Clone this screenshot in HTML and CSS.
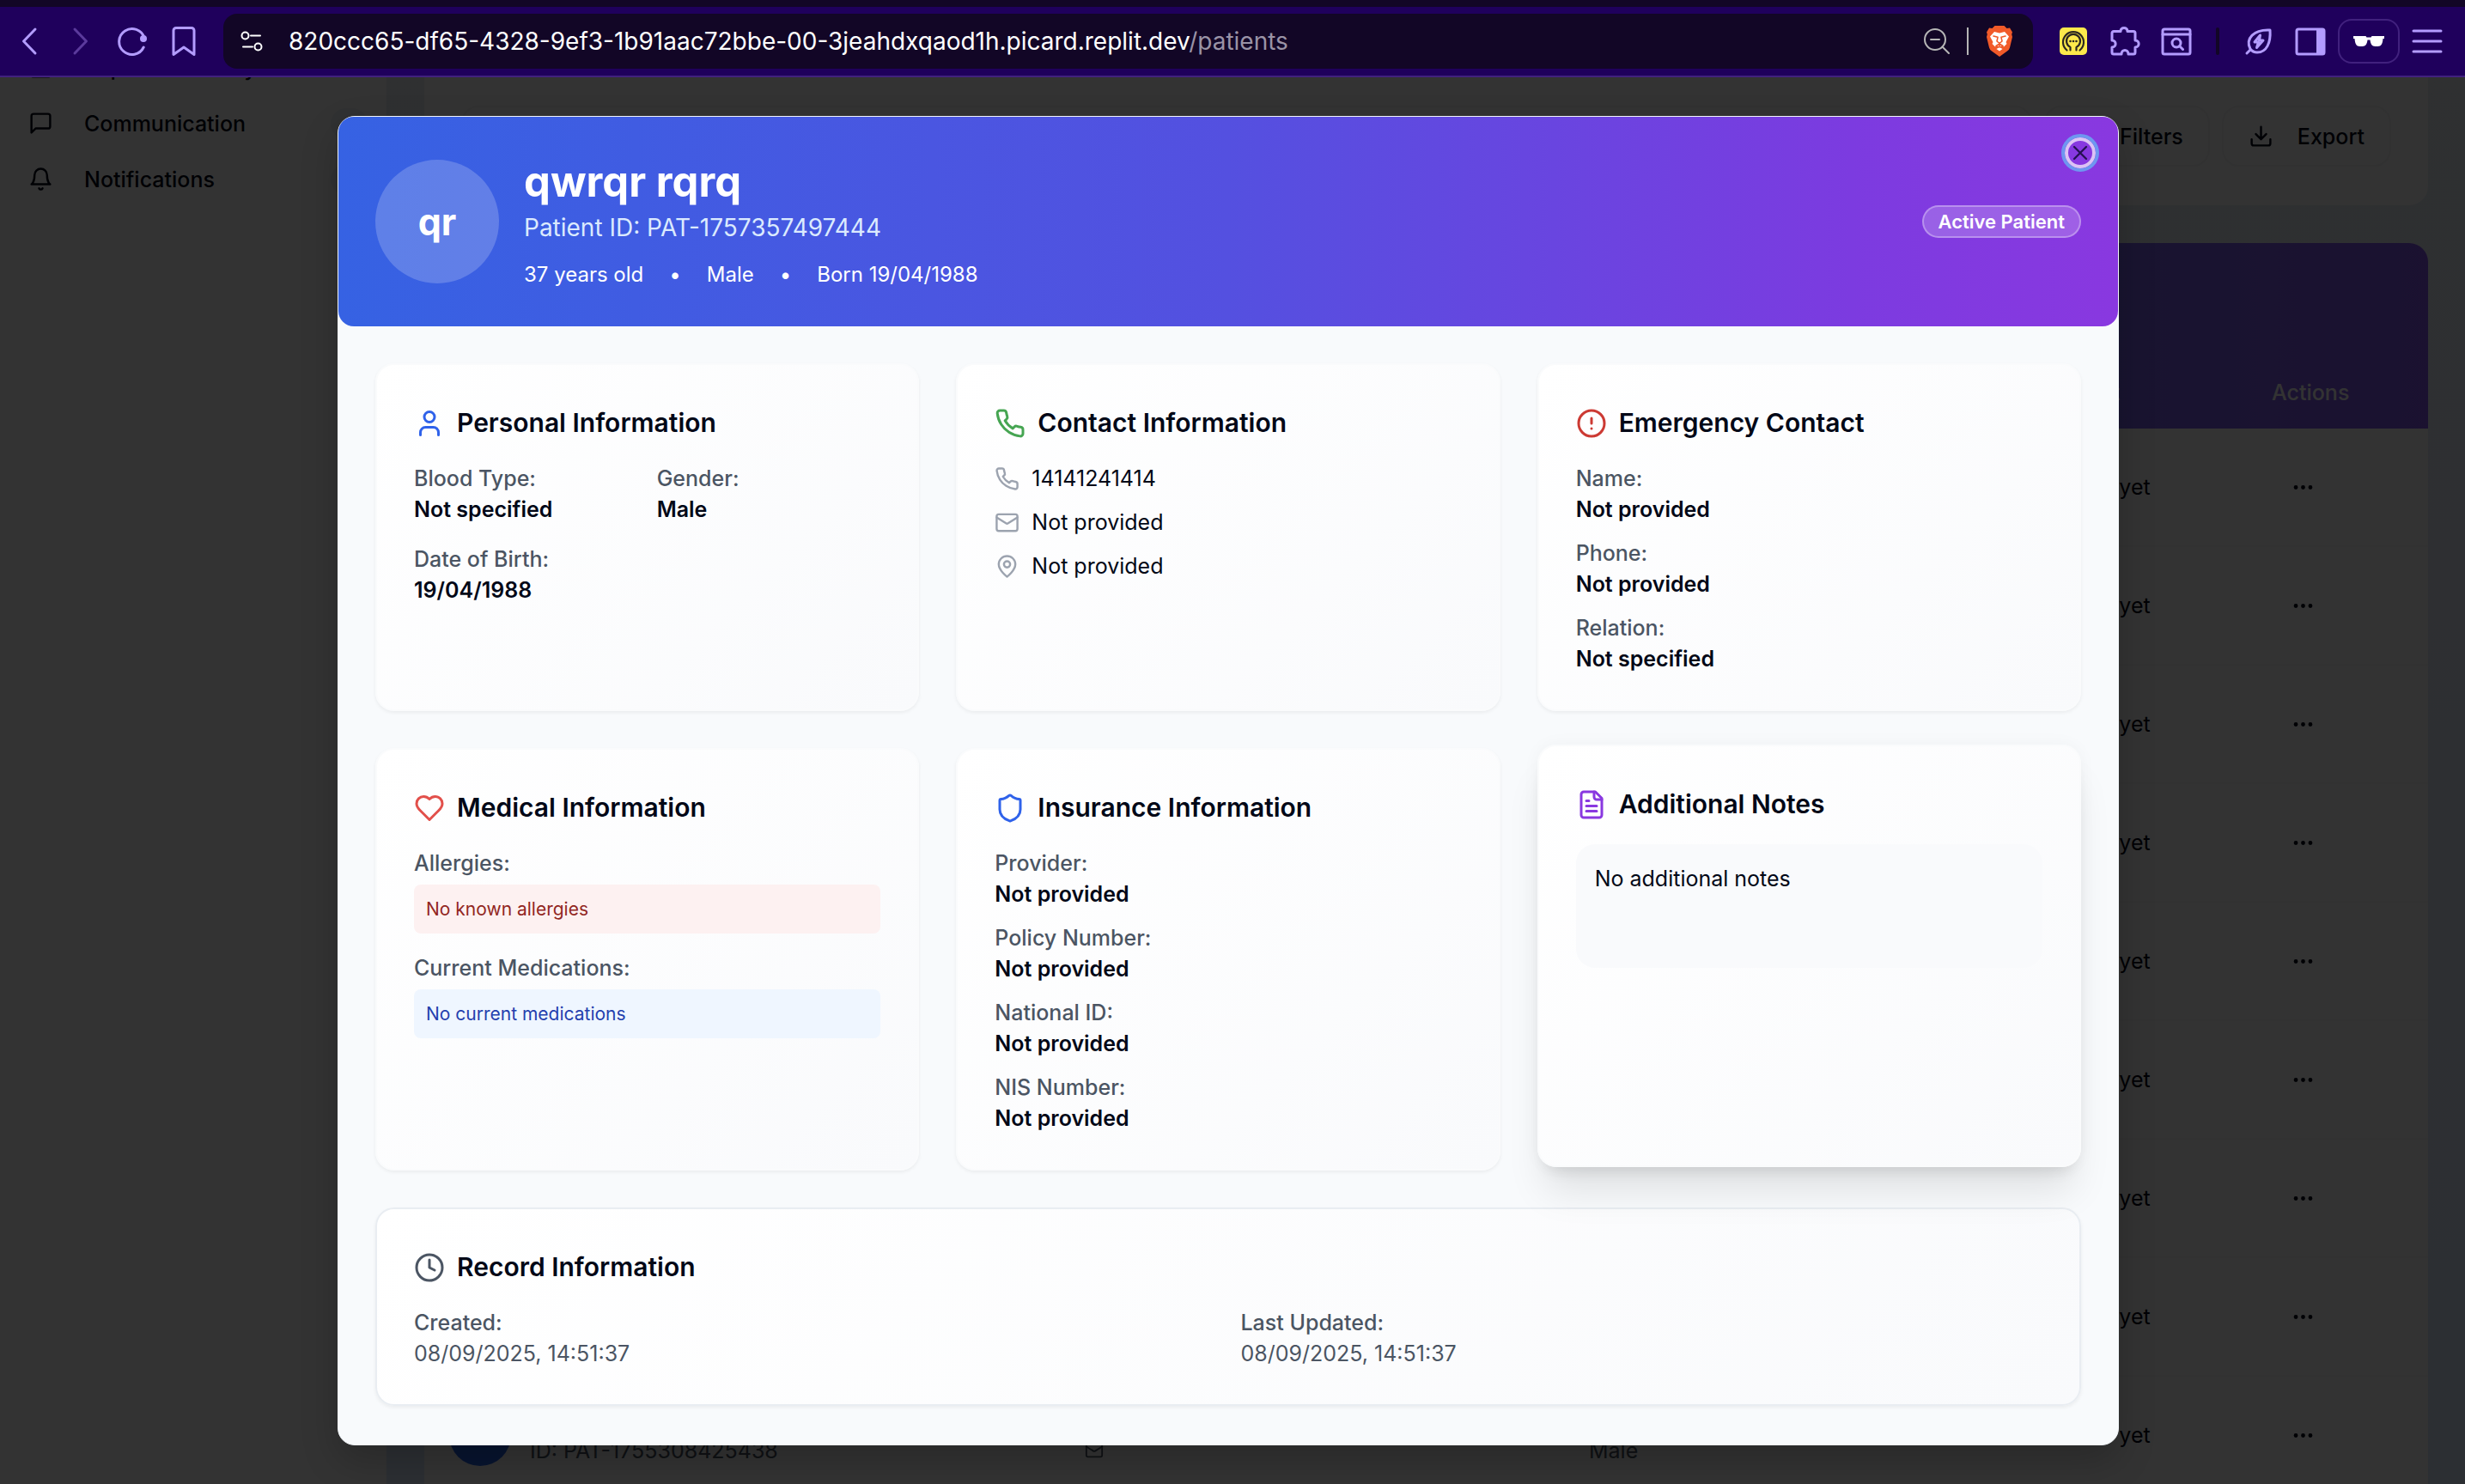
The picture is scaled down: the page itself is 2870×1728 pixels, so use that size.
FILE: index.html
```html
<!DOCTYPE html>
<html lang="en">
<head>
<meta charset="utf-8">
<title>Patients</title>
<link rel="stylesheet" href="styles.css">
</head>
<body>
<svg class="sprite" aria-hidden="true">
  <symbol id="i-phone" viewBox="0 0 24 24"><path d="M22 16.92v3a2 2 0 0 1-2.18 2 19.79 19.79 0 0 1-8.63-3.07 19.5 19.5 0 0 1-6-6 19.79 19.79 0 0 1-3.07-8.67A2 2 0 0 1 4.11 2h3a2 2 0 0 1 2 1.72 12.84 12.84 0 0 0 .7 2.81 2 2 0 0 1-.45 2.11L8.09 9.91a16 16 0 0 0 6 6l1.27-1.27a2 2 0 0 1 2.11-.45 12.84 12.84 0 0 0 2.81.7A2 2 0 0 1 22 16.92z"/></symbol>
  <symbol id="i-mail" viewBox="0 0 24 24"><rect width="20" height="16" x="2" y="4" rx="2"/><path d="m22 7-8.97 5.7a1.94 1.94 0 0 1-2.06 0L2 7"/></symbol>
  <symbol id="i-dots" viewBox="0 0 24 24"><circle cx="12" cy="12" r="1"/><circle cx="19" cy="12" r="1"/><circle cx="5" cy="12" r="1"/></symbol>
</svg>

<header class="browser">
  <div class="tool-group">
    <button class="tool" aria-label="Back"><svg class="ti" viewBox="0 0 36 36"><path d="M25 4 11.500 18 25 32"/></svg></button>
    <button class="tool tool-off" aria-label="Forward"><svg class="ti" viewBox="0 0 36 36"><path d="M11 4 24.500 18 11 32"/></svg></button>
    <button class="tool" aria-label="Reload"><svg class="ti" viewBox="0 0 36 36"><path d="M31.200 25A15 15 0 1 1 32 14"/><circle class="solid" cx="31" cy="15" r="4"/></svg></button>
    <button class="tool" aria-label="Bookmark"><svg class="ti" viewBox="0 0 36 36"><path d="M9 2.500h18a3 3 0 0 1 3 3v28l-12-8.500-12 8.500v-28a3 3 0 0 1 3-3z"/></svg></button>
  </div>
  <div class="address">
    <svg class="tune" viewBox="0 0 26 26"><circle cx="5.500" cy="6.500" r="4"/><path d="M12 6.500h11M3 19.500h11"/><circle cx="20.500" cy="19.500" r="4"/></svg>
    <p class="url">820ccc65-df65-4328-9ef3-1b91aac72bbe-00-3jeahdxqaod1h.picard.replit.dev<span class="url-path">/patients</span></p>
    <div class="address-end">
      <svg class="zoom-out" viewBox="0 0 30 30"><circle cx="13" cy="13" r="12"/><path d="M8 13h10M21.500 21.500 29 29"/></svg>
      <span class="address-line"></span>
      <svg class="brave" viewBox="0 0 32 36"><path fill="#f15a29" d="M10.500 0h11l3 3 3.500-.5 3 5-.8 2.500.8 3-3 12.500a7 7 0 0 1-3 4L16 36l-9-6.500a7 7 0 0 1-3-4L1 13l.8-3L1 7.500l3-5 3.500.5z"/><path fill="#fff" d="M10 7l6 1.500L22 7l5 5.500-3.500 6.500 1 2-3.500 3.500-2-1.500-3 1.500-3-1.500-2 1.500L7.500 21l1-2L5 12.500zM16 25l3.500 2-3.500 2.500-3.500-2.500z"/><path fill="none" stroke="#f15a29" stroke-width="1.600" d="M9 12l5 1.300-1 4.700 3 2.500 3-2.500-1-4.700 5-1.300M12 23.500l4-2.500 4 2.500M16 21v4"/></svg>
    </div>
  </div>
  <div class="tool-group">
    <button class="tool" aria-label="Password manager"><svg class="ti-sm" viewBox="0 0 32 32"><rect width="32" height="32" rx="5" fill="#fde94b"/><g fill="none" stroke="#2b2720" stroke-width="2.200"><path d="M8.500 26.500A12 12 0 1 1 23.500 26.500"/><path d="M12.500 26.500V23A8 8 0 1 1 19.500 23v3.500"/></g><g fill="#2b2720"><circle cx="12.500" cy="16" r="1.300"/><circle cx="16" cy="16" r="1.300"/><circle cx="19.500" cy="16" r="1.300"/></g></svg></button>
    <button class="tool" aria-label="Extensions"><svg class="ti" viewBox="0 0 36 36"><path d="M5 6.500h8c0-5.500 8-5.500 8 0h7a2 2 0 0 1 2 2V17c5.500 0 5.500 8 0 8v6a2 2 0 0 1-2 2h-6c0-6-8-6-8 0H5a2 2 0 0 1-2-2v-6c5.500 0 5.500-8 0-8V8.500a2 2 0 0 1 2-2z"/></svg></button>
    <button class="tool" aria-label="Search tabs"><svg class="ti" viewBox="0 0 36 36"><rect x="2" y="4" width="32" height="29" rx="2"/><path d="M2 10h32M21.500 23.500l4 4"/><circle cx="18" cy="20" r="5"/></svg></button>
    <span class="tool-line"></span>
    <button class="tool" aria-label="Energy saver"><svg class="ti" viewBox="0 0 36 36"><path d="M4 32l4-4M8 27C2 15 12 4 31 5c1 15-4 26-15 26-4 0-6.500-2-8-4z"/><path d="M19.500 11 13 19h4.500l-2 6.500L23 17h-4.500z"/></svg></button>
    <button class="tool" aria-label="Side panel"><svg class="ti" viewBox="0 0 36 36"><rect x="2" y="4" width="32" height="29" rx="2"/><path class="solid" d="M25 4h8v29h-8z"/></svg></button>
    <button class="tool tool-box" aria-label="Private window"><svg class="ti" viewBox="0 0 36 36"><path fill="#fff" stroke="none" d="M0 12h14.500l1 1.500h5l1-1.500H36v3h-1.500c-.5 6-2 9-6 9h-3c-4 0-5.500-3-6-7.500h-3c-.5 4.500-2 7.500-6 7.500h-3c-4 0-5.500-3-6-9H0z"/></svg></button>
    <button class="tool" aria-label="Menu"><svg class="ti" viewBox="0 0 36 36"><path d="M2 6h32M2 18h32M2 30h32"/></svg></button>
  </div>
</header>

<main class="app">
  <nav class="sidebar">
    <a class="nav-item" href="#"><svg class="icon-m" viewBox="0 0 24 24"><rect x="3" y="3" width="18" height="18" rx="2"/><path d="M8 8h8M8 12h8"/></svg>Report Summary</a>
    <a class="nav-item" href="#"><svg class="icon-m" viewBox="0 0 24 24"><path d="M21 15a2 2 0 0 1-2 2H7l-4 4V5a2 2 0 0 1 2-2h14a2 2 0 0 1 2 2z"/></svg>Communication<span class="count"></span></a>
    <a class="nav-item" href="#"><svg class="icon-m" viewBox="0 0 24 24"><path d="M6 8a6 6 0 0 1 12 0c0 7 3 9 3 9H3s3-2 3-9"/><path d="M10.300 21a1.940 1.940 0 0 0 3.400 0"/></svg>Notifications<span class="count"></span></a>
  </nav>
  <div class="content">
    <section class="filters">
      <input class="search" type="text" aria-label="Search patients">
      <button class="outline-btn"><svg class="icon-m" viewBox="0 0 24 24"><path d="M22 3H2l8 9.460V19l4 2v-8.540z"/></svg>Filters</button>
      <button class="outline-btn"><svg class="icon-m" viewBox="0 0 24 24"><path d="M21 15v4a2 2 0 0 1-2 2H5a2 2 0 0 1-2-2v-4M7 10l5 5 5-5M12 15V3"/></svg>Export</button>
    </section>
    <table class="patients">
      <thead><tr><th>Patient</th><th>Contact</th><th>Gender</th><th>Last Visit</th><th>Actions</th></tr></thead>
      <tbody>
        <tr><td></td><td></td><td></td><td>No visits yet</td><td><button class="more" aria-label="Row actions"><svg class="icon-m"><use href="#i-dots"/></svg></button></td></tr>
        <tr><td></td><td></td><td></td><td>No visits yet</td><td><button class="more" aria-label="Row actions"><svg class="icon-m"><use href="#i-dots"/></svg></button></td></tr>
        <tr><td></td><td></td><td></td><td>No visits yet</td><td><button class="more" aria-label="Row actions"><svg class="icon-m"><use href="#i-dots"/></svg></button></td></tr>
        <tr><td></td><td></td><td></td><td>No visits yet</td><td><button class="more" aria-label="Row actions"><svg class="icon-m"><use href="#i-dots"/></svg></button></td></tr>
        <tr><td></td><td></td><td></td><td>No visits yet</td><td><button class="more" aria-label="Row actions"><svg class="icon-m"><use href="#i-dots"/></svg></button></td></tr>
        <tr><td></td><td></td><td></td><td>No visits yet</td><td><button class="more" aria-label="Row actions"><svg class="icon-m"><use href="#i-dots"/></svg></button></td></tr>
        <tr><td></td><td></td><td></td><td>No visits yet</td><td><button class="more" aria-label="Row actions"><svg class="icon-m"><use href="#i-dots"/></svg></button></td></tr>
        <tr><td></td><td></td><td></td><td>No visits yet</td><td><button class="more" aria-label="Row actions"><svg class="icon-m"><use href="#i-dots"/></svg></button></td></tr>
        <tr>
          <td><div class="who"><span class="who-avatar"></span><div class="who-text"><span>Patient</span><span class="muted">ID: PAT-1755308425438</span></div></div></td>
          <td><div class="stack"><span>Phone</span><svg class="icon-s muted"><use href="#i-mail"/></svg></div></td>
          <td><div class="stack"><span>37 years</span><span class="muted">Male</span></div></td>
          <td>No visits yet</td><td><button class="more" aria-label="Row actions"><svg class="icon-m"><use href="#i-dots"/></svg></button></td>
        </tr>
      </tbody>
    </table>
  </div>

  <div class="overlay">
    <div class="dialog" role="dialog" aria-labelledby="patient-name">
      <div class="hero">
        <span class="hero-avatar">qr</span>
        <div class="hero-text">
          <h1 class="hero-name" id="patient-name">qwrqr rqrq</h1>
          <p class="hero-id">Patient ID: PAT-1757357497444</p>
          <p class="hero-facts"><span>37 years old</span><span>•</span><span>Male</span><span>•</span><span>Born 19/04/1988</span></p>
        </div>
        <span class="badge">Active Patient</span>
        <button class="close" aria-label="Close"><svg class="close-x" viewBox="0 0 24 24"><path d="M18 6 6 18M6 6l12 12"/></svg></button>
      </div>
      <div class="cards">
        <section class="card">
          <h2 class="card-title"><svg class="icon-l blue" viewBox="0 0 24 24"><path d="M19 21v-2a4 4 0 0 0-4-4H9a4 4 0 0 0-4 4v2"/><circle cx="12" cy="7" r="4"/></svg>Personal Information</h2>
          <dl class="pairs two">
            <div><dt>Blood Type:</dt><dd>Not specified</dd></div>
            <div><dt>Gender:</dt><dd>Male</dd></div>
            <div><dt>Date of Birth:</dt><dd>19/04/1988</dd></div>
          </dl>
        </section>
        <section class="card">
          <h2 class="card-title"><svg class="icon-l green"><use href="#i-phone"/></svg>Contact Information</h2>
          <ul class="contacts">
            <li><svg class="icon-m grey"><use href="#i-phone"/></svg>14141241414</li>
            <li><svg class="icon-m grey"><use href="#i-mail"/></svg>Not provided</li>
            <li><svg class="icon-m grey" viewBox="0 0 24 24"><path d="M20 10c0 6-8 12-8 12s-8-6-8-12a8 8 0 0 1 16 0Z"/><circle cx="12" cy="10" r="3"/></svg>Not provided</li>
          </ul>
        </section>
        <section class="card">
          <h2 class="card-title"><svg class="icon-l red" viewBox="0 0 24 24"><circle cx="12" cy="12" r="10"/><path d="M12 8v4M12 16h.01"/></svg>Emergency Contact</h2>
          <dl class="pairs">
            <div><dt>Name:</dt><dd>Not provided</dd></div>
            <div><dt>Phone:</dt><dd>Not provided</dd></div>
            <div><dt>Relation:</dt><dd>Not specified</dd></div>
          </dl>
        </section>
        <section class="card">
          <h2 class="card-title"><svg class="icon-l rose" viewBox="0 0 24 24"><path d="M19 14c1.490-1.460 3-3.210 3-5.500A5.500 5.500 0 0 0 16.500 3c-1.760 0-3 .5-4.500 2-1.500-1.500-2.740-2-4.500-2A5.500 5.500 0 0 0 2 8.500c0 2.300 1.500 4.050 3 5.500l7 7Z"/></svg>Medical Information</h2>
          <h3 class="label">Allergies:</h3>
          <p class="note note-red">No known allergies</p>
          <h3 class="label">Current Medications:</h3>
          <p class="note note-blue">No current medications</p>
        </section>
        <section class="card">
          <h2 class="card-title"><svg class="icon-l blue" viewBox="0 0 24 24"><path d="M20 13c0 5-3.500 7.500-7.660 8.950a1 1 0 0 1-.67-.01C7.500 20.500 4 18 4 13V6a1 1 0 0 1 1-1c2 0 4.500-1.200 6.240-2.720a1.170 1.170 0 0 1 1.520 0C14.510 3.810 17 5 19 5a1 1 0 0 1 1 1z"/></svg>Insurance Information</h2>
          <dl class="pairs">
            <div><dt>Provider:</dt><dd>Not provided</dd></div>
            <div><dt>Policy Number:</dt><dd>Not provided</dd></div>
            <div><dt>National ID:</dt><dd>Not provided</dd></div>
            <div><dt>NIS Number:</dt><dd>Not provided</dd></div>
          </dl>
        </section>
        <section class="card card-raised">
          <h2 class="card-title"><svg class="icon-l purple" viewBox="0 0 24 24"><path d="M15 2H6a2 2 0 0 0-2 2v16a2 2 0 0 0 2 2h12a2 2 0 0 0 2-2V7Z"/><path d="M14 2v4a2 2 0 0 0 2 2h4M10 9H8M16 13H8M16 17H8"/></svg>Additional Notes</h2>
          <p class="notes">No additional notes</p>
        </section>
        <section class="card card-wide">
          <h2 class="card-title"><svg class="icon-l slate" viewBox="0 0 24 24"><circle cx="12" cy="12" r="10"/><path d="M12 6v6l4 2"/></svg>Record Information</h2>
          <dl class="pairs two record">
            <div><dt>Created:</dt><dd>08/09/2025, 14:51:37</dd></div>
            <div><dt>Last Updated:</dt><dd>08/09/2025, 14:51:37</dd></div>
          </dl>
        </section>
      </div>
    </div>
  </div>
</main>
</body>
</html>
```
FILE: styles.css
```css
* { box-sizing: border-box; margin: 0; padding: 0; }

body {
  display: flex;
  flex-direction: column;
  height: 100vh;
  overflow: hidden;
  font-family: Inter, "Liberation Sans", sans-serif;
  font-size: 25px;
  line-height: 36px;
  color: #020817;
}
button { font: inherit; color: inherit; background: none; border: 0; }
a { color: inherit; text-decoration: none; }
svg { flex: none; fill: none; stroke: currentColor; stroke-width: 2; stroke-linecap: round; stroke-linejoin: round; }
.sprite { position: absolute; width: 0; height: 0; }
.icon-s { width: 22px; height: 22px; }
.icon-m { width: 29px; height: 29px; }
.icon-l { width: 36px; height: 36px; }

/* Browser toolbar */
.browser {
  display: flex;
  align-items: center;
  flex: none;
  height: 90px;
  padding: 0 14px 0 4px;
  background: #1f005c;
  border-top: 8px solid #120626;
  border-bottom: 2px solid #41217e;
  color: #b39cff;
}
.tool-group { display: flex; align-items: center; }
.tool { display: flex; justify-content: center; align-items: center; width: 60px; height: 64px; }
.tool-off { color: #5b3a9c; }
.ti { width: 36px; height: 36px; stroke-width: 3; }
.ti-sm { width: 32px; height: 32px; stroke: none; }
.solid { fill: currentColor; stroke: none; }
.tool-line { width: 4px; height: 32px; margin: 0 16px; border-radius: 2px; background: #120626; }
.tool-box { width: 72px; height: 52px; margin: 0 2px; border: 2px solid #41217e; border-radius: 16px; }
.address {
  display: flex;
  align-items: center;
  flex: 1;
  min-width: 0;
  height: 64px;
  margin: 0 17px 0 16px;
  padding: 0 23px 0 20px;
  border-radius: 16px;
  background: #120626;
  color: #fff;
}
.tune { width: 26px; height: 26px; stroke-width: 2; }
.url { flex: 1; margin-left: 30px; font-size: 28px; white-space: nowrap; }
.url-path { color: #9a93a6; }
.address-end { display: flex; align-items: center; gap: 20px; }
.zoom-out { width: 30px; height: 30px; color: #b5b5b5; }
.address-line { width: 2px; height: 32px; background: #b5b5b5; }
.brave { width: 32px; height: 36px; stroke: none; }

/* Page under the dialog */
.app { position: relative; display: flex; flex: 1; min-height: 0; overflow: hidden; background: linear-gradient(180deg, #e8edf5, #dbeafe); }
.sidebar { flex: none; width: 450px; padding-left: 33px; background: #fff; font-weight: 500; }
.nav-item { display: flex; align-items: center; gap: 36px; height: 65px; }
.nav-item:first-child { margin-top: -44px; }
.count { width: 43px; height: 36px; margin: 0 22px 0 auto; border-radius: 18px; background: #f1f5f9; }
.content { flex: 1; min-width: 0; margin: 0 43px 0 44px; }
.filters { display: flex; align-items: center; gap: 14px; padding: 33px 43px 45px; border-radius: 0 0 22px 22px; background: #fdfdfd; font-weight: 500; }
.search { flex: 1; height: 71px; border: 2px solid #f3f4f6; border-radius: 20px; background: #fdfdfd; }
.outline-btn { display: flex; align-items: center; gap: 28px; height: 71px; padding: 0 29px; border: 2px solid #f3f4f6; border-radius: 20px; }
.patients { width: 100%; margin-top: 44px; border-collapse: separate; border-spacing: 0; border-radius: 22px 22px 0 0; overflow: hidden; background: #fdfdfd; table-layout: fixed; }
.patients th { height: 216px; padding: 0 29px 24px; vertical-align: bottom; text-align: left; font-weight: 500; color: #fff; }
.patients thead { background: linear-gradient(90deg, #2563eb, #7a66ee 82%, #8558ee); }
.patients th:nth-child(1) { width: 740px; }
.patients th:nth-child(2) { width: 587px; }
.patients th:nth-child(4) { width: 286px; }
.patients th:nth-child(5) { width: 211px; }
.patients td { height: 138px; padding: 0 29px; border-bottom: 2px solid #f8f8f8; font-weight: 400; }
.more { display: flex; padding: 0 22px; }
.who { display: flex; align-items: center; gap: 22px; }
.who-avatar { width: 72px; height: 72px; border-radius: 36px; background: #2563eb; }
.who-text, .stack { display: flex; flex-direction: column; }
.muted { color: #4b5563; }

/* Dialog */
.overlay {
  position: absolute;
  inset: 0;
  display: flex;
  justify-content: center;
  align-items: center;
  padding-right: 10px;
  background: rgba(0, 0, 0, 0.8);
}
.dialog {
  width: 100%;
  max-width: 2074px;
  border: 1px solid #f1f5f9;
  border-radius: 20px;
  background: #f8fafc;
  box-shadow: 0 18px 44px rgba(0, 0, 0, 0.2);
}
.hero {
  position: relative;
  display: flex;
  align-items: center;
  gap: 29px;
  height: 244px;
  padding: 0 43px;
  border-radius: 18px;
  background: linear-gradient(90deg, #3662e3, #5450e0 50%, #7c3be0 85%, #8938e0);
  color: #fff;
}
.hero-avatar { display: flex; justify-content: center; align-items: center; width: 144px; height: 144px; border-radius: 72px; background: rgba(255, 255, 255, 0.2); font-size: 43px; font-weight: 700; }
.hero-text { flex: 1; padding-top: 6px; }
.hero-name { font-size: 49px; line-height: 54px; font-weight: 700; }
.hero-id { margin-top: 4px; font-size: 28px; line-height: 44px; color: #dbeafe; }
.hero-facts { display: flex; gap: 30px; margin-top: 15px; font-size: 24px; }
.badge { padding: 0 17px; border: 2px solid rgba(255, 255, 255, 0.3); border-radius: 20px; background: rgba(255, 255, 255, 0.2); font-size: 22px; line-height: 34px; font-weight: 600; }
.close { position: absolute; top: 20px; right: 22px; display: flex; justify-content: center; align-items: center; width: 44px; height: 44px; border: 4px solid #6e97f0; border-radius: 22px; box-shadow: inset 0 0 0 4px #dcc3f5; color: #251052; }
.close-x { width: 28px; height: 28px; }

.cards { display: grid; grid-template-columns: repeat(3, 1fr); gap: 43px; padding: 43px 43px 45px; }
.card { padding: 43px 43px 41px; border: 2px solid #fafbfc; border-radius: 22px; background: linear-gradient(135deg, #fff, #f9fafc); box-shadow: 0 2px 4px rgba(0, 0, 0, 0.06); }
.card-raised { transform: translateY(-4px); box-shadow: 0 36px 45px -9px rgba(0, 0, 0, 0.1), 0 14px 18px -11px rgba(0, 0, 0, 0.1), 0 0 20px rgba(0, 0, 0, 0.04); }
.card-wide { grid-column: 1 / -1; border-color: #e9edf2; }
.card-title { display: flex; align-items: center; gap: 14px; margin-bottom: 22px; font-size: 30px; line-height: 49px; font-weight: 600; }
.blue { color: #2f62ea; }
.green { color: #46a552; }
.red { color: #cc3a33; }
.rose { color: #e2504b; }
.purple { color: #8938e0; }
.slate { color: #4b5563; }
.grey { color: #9ca3af; }

.pairs { display: grid; gap: 15px; }
.pairs.two { grid-template-columns: 1fr 1fr; gap: 22px; }
.pairs.record { gap: 29px; }
.pairs dt, .label { font-size: 25px; font-weight: 500; color: #4b5563; }
.pairs dd { font-weight: 600; }
.pairs.record dd { font-weight: 400; color: #4b5563; }
.contacts { display: grid; gap: 15px; list-style: none; }
.contacts li { display: flex; align-items: center; gap: 14px; }
.note { margin: 7px 0 22px; padding: 14px; border-radius: 8px; font-size: 21px; line-height: 29px; }
.note-red { background: #fdf1f1; color: #92271f; }
.note-blue { background: #eff6ff; color: #2440ae; }
.notes { min-height: 144px; padding: 22px; border-radius: 22px; background: #f9fafc; }
```
